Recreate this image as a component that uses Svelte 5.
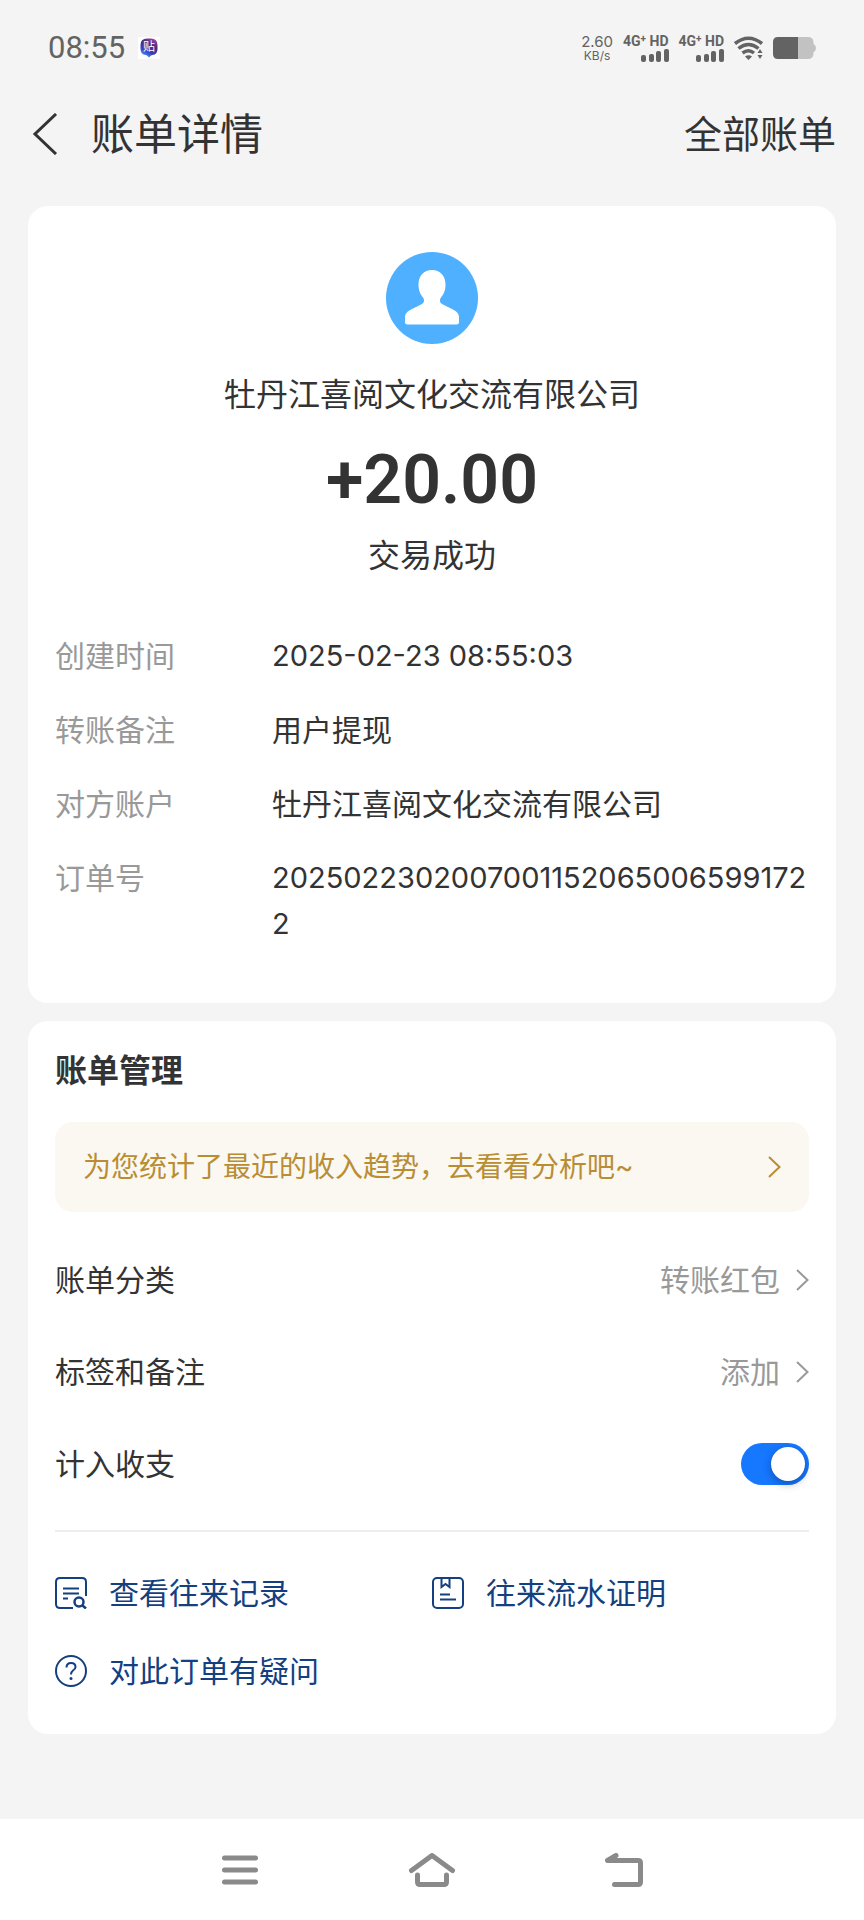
<script lang="ts">
	type Detail = { label: string; value: string; numeric?: boolean };

	const details: Detail[] = [
		{ label: '创建时间', value: '2025-02-23 08:55:03', numeric: true },
		{ label: '转账备注', value: '用户提现' },
		{ label: '对方账户', value: '牡丹江喜阅文化交流有限公司' },
		{ label: '订单号', value: '20250223020070011520650065991722', numeric: true }
	];

	const options = [
		{ label: '账单分类', value: '转账红包' },
		{ label: '标签和备注', value: '添加' }
	];

	const links = [
		{ icon: 'records', label: '查看往来记录' },
		{ icon: 'proof', label: '往来流水证明' },
		{ icon: 'help', label: '对此订单有疑问' }
	];

	let counted = $state(true);
</script>

{#snippet signal()}
	<div class="signal">
		<span class="net">4G<sup>+</sup> HD</span>
		<svg width="28" height="13" viewBox="0 0 28 13" fill="#636363">
			<rect x="0" y="6" width="5" height="7" rx="2" />
			<rect x="8" y="5" width="5" height="8" rx="2" />
			<rect x="15" y="2" width="5" height="11" rx="2" />
			<rect x="23" y="0" width="5" height="13" rx="2" />
		</svg>
	</div>
{/snippet}

{#snippet chevron()}
	<svg width="13" height="22" viewBox="0 0 13 22" fill="none" stroke="currentColor" stroke-width="2">
		<path d="M1 1l10.500 10L1 21" />
	</svg>
{/snippet}

<div class="page">
	<div class="status">
		<span class="time">08:55</span>
		<span class="notice">
			<svg width="18" height="20" viewBox="0 0 18 20">
				<defs>
					<linearGradient id="notice-fill" x1="0.8" y1="0" x2="0.3" y2="1">
						<stop offset="0" stop-color="#b0409c" />
						<stop offset="0.35" stop-color="#43307f" />
						<stop offset="0.7" stop-color="#3d3fc0" />
						<stop offset="1" stop-color="#3fa4ff" />
					</linearGradient>
				</defs>
				<path d="M7 .5h4q6.500 0 6.500 6.500v4q0 5.500-5 6l-1.500.5-2 2-2-2-1.500-.5q-5-.5-5-6V7Q.5.5 7 .5z" fill="url(#notice-fill)" />
				<text x="9" y="13" text-anchor="middle" class="notice-text">贴</text>
			</svg>
		</span>
		<div class="status-right">
			<div class="speed">
				<span class="rate">2.60</span>
				<span class="unit">KB/s</span>
			</div>
			{@render signal()}
			{@render signal()}
			<svg width="29" height="24" viewBox="0 0 29 24" fill="none" stroke="#636363" stroke-width="3.500">
				<path d="M1 7.500Q14.500-3 28 7.500" />
				<path d="M4.500 12.500Q14.500 4.500 24.500 12.500" />
				<path d="M8.500 17Q14.500 12.500 20 17" />
				<path d="M11 20.500q3.500-2.500 7 0L14.500 24z" fill="#636363" stroke="none" />
				<path d="M26 13l2.500 4h-5zM26 23l2.500-4h-5z" fill="#636363" stroke="none" />
			</svg>
			<svg width="43" height="22" viewBox="0 0 43 22">
				<path d="M25 0h10q5 0 5.500 5v2q2.500 1 2.500 4t-2.500 4v2q-.5 5-5.500 5H25z" fill="#c2c2c2" />
				<path d="M5 0h20v22H5q-5 0-5-5V5q0-5 5-5z" fill="#636363" />
			</svg>
		</div>
	</div>

	<header>
		<button class="back" aria-label="返回">
			<svg width="26" height="42" viewBox="0 0 26 42" fill="none" stroke="#333" stroke-width="3">
				<path d="M24 1L3 21l21 20" />
			</svg>
		</button>
		<h1>账单详情</h1>
		<a class="all" href="#all">全部账单</a>
	</header>

	<main>
		<section class="card summary">
			<svg class="avatar" width="92" height="92" viewBox="0 0 92 92">
				<circle cx="46" cy="46" r="46" fill="#4fb0ff" />
				<path
					d="M46 18c8 0 13.500 5.500 13.500 14.500 0 6-2 10-4.500 13-1.500 2-1.500 5 1 6.500l11 5.500c4.500 2.500 6 4.500 6 8V70q0 2.500-2.500 2.500h-49Q19 72.500 19 70v-4.500c0-3.500 1.500-5.500 6-8L36 52c2.500-1.500 2.500-4.500 1-6.500-2.500-3-4.500-7-4.500-13C32.500 23.500 38 18 46 18z"
					fill="#fff"
				/>
			</svg>
			<p class="payee">牡丹江喜阅文化交流有限公司</p>
			<p class="amount">+20.00</p>
			<p class="result">交易成功</p>
			<dl>
				{#each details as item}
					<div class="detail">
						<dt>{item.label}</dt>
						<dd class:numeric={item.numeric}>{item.value}</dd>
					</div>
				{/each}
			</dl>
		</section>

		<section class="card manage">
			<h2>账单管理</h2>
			<a class="banner" href="#analysis">
				<span>为您统计了最近的收入趋势，去看看分析吧~</span>
				{@render chevron()}
			</a>

			<div class="options">
				{#each options as option}
					<button class="option">
						<span>{option.label}</span>
						<span class="option-value">
							{option.value}
							{@render chevron()}
						</span>
					</button>
				{/each}
				<div class="option">
					<label for="counted">计入收支</label>
					<input id="counted" class="toggle" type="checkbox" role="switch" bind:checked={counted} />
				</div>
			</div>

			<nav class="links">
				{#each links as link}
					<a href="#{link.icon}">
						<svg width="32" height="32" viewBox="0 0 32 32" fill="none" stroke="currentColor" stroke-width="2">
							{#if link.icon === 'records'}
								<path d="M18 31H5q-4 0-4-4V5q0-4 4-4h22q4 0 4 4v14" />
								<path d="M8 11.500h16M8 16.500h16M8 21.500h5" />
								<circle cx="24" cy="25" r="4.500" stroke-width="2.500" />
								<path d="M27.500 28.500l3.500 3" stroke-width="2.500" />
							{:else if link.icon === 'proof'}
								<rect x="1" y="1" width="30" height="30" rx="4" />
								<path d="M9.500 1v9l4-3 4 3V1" />
								<path d="M8 17.500h10M8 22.500h16" />
							{:else}
								<circle cx="16" cy="16" r="15" />
								<path d="M11.500 12.500q0-4.500 4.500-4.500t4.500 4q0 2-2.500 3.500-2 1.500-2 4" />
								<circle cx="16" cy="23.500" r="1.500" fill="currentColor" stroke="none" />
							{/if}
						</svg>
						<span>{link.label}</span>
					</a>
				{/each}
			</nav>
		</section>
	</main>

	<div class="system-nav">
		<button aria-label="最近任务">
			<svg width="36" height="30" viewBox="0 0 36 30">
				<path d="M2.500 3h31M2.500 15h31M2.500 27h31" />
			</svg>
		</button>
		<button aria-label="主屏幕">
			<svg width="46" height="34" viewBox="0 0 46 34">
				<path d="M2.500 17.500L23 2.500l20.500 15" />
				<path d="M8.500 22v7q0 2.500 2.500 2.500h24q2.500 0 2.500-2.500v-7" />
			</svg>
		</button>
		<button aria-label="返回上一页">
			<svg width="38" height="34" viewBox="0 0 38 34">
				<path d="M11 2.500L2.500 7.500H33q2.500 0 2.500 2.500v19q0 2.500-2.500 2.500H9.500" />
			</svg>
		</button>
	</div>
</div>

<style>
	:global(body) {
		background: #f4f4f4;
	}

	.page {
		min-height: 100vh;
		display: flex;
		flex-direction: column;
		background: #f4f4f4;
		color: #333;
		font-family: Inter, 'Noto Sans CJK SC', sans-serif;
		font-size: 30px;
		line-height: 46px;
	}

	h1,
	h2,
	p,
	dl,
	dd {
		margin: 0;
	}

	a {
		color: inherit;
		text-decoration: none;
	}

	button {
		padding: 0;
		border: 0;
		background: none;
		color: inherit;
		font: inherit;
		cursor: pointer;
	}

	svg {
		display: block;
		flex: none;
	}

	.status {
		display: flex;
		align-items: center;
		height: 96px;
		padding: 0 48px;
		color: #636363;
	}

	.time {
		font-family: Roboto, sans-serif;
		font-size: 31px;
	}

	.notice {
		display: flex;
		justify-content: center;
		margin-left: 13px;
		padding: 1px 2px;
		background: #fff;
	}

	.notice-text {
		fill: #fff;
		font-size: 12px;
		font-weight: 400;
	}

	.status-right {
		display: flex;
		align-items: center;
		gap: 10px;
		margin-left: auto;
	}

	.speed {
		display: flex;
		flex-direction: column;
		align-items: center;
	}

	.rate {
		font-size: 15px;
		line-height: 16px;
	}

	.unit {
		font-size: 12px;
		line-height: 12px;
	}

	.signal {
		display: flex;
		flex-direction: column;
		align-items: flex-end;
		gap: 1px;
	}

	.net {
		font-family: Roboto, sans-serif;
		font-size: 14px;
		font-weight: 700;
		line-height: 13px;
	}

	.net sup {
		font-size: 10px;
		line-height: 0;
		vertical-align: 4px;
	}

	header {
		display: flex;
		align-items: center;
		height: 76px;
		margin-bottom: 34px;
		padding: 0 28px;
	}

	.back {
		padding: 0 4px;
	}

	h1 {
		margin-left: 29px;
		font-size: 43px;
		font-weight: 400;
	}

	.all {
		margin-left: auto;
		font-size: 38px;
	}

	main {
		display: flex;
		flex-direction: column;
		gap: 18px;
		padding: 0 28px;
	}

	.card {
		padding: 27px;
		border-radius: 20px;
		background: #fff;
	}

	.summary {
		padding-top: 46px;
		padding-bottom: 56px;
		text-align: center;
	}

	.avatar {
		margin: 0 auto 28px;
	}

	.payee,
	.result {
		font-size: 32px;
	}

	.amount {
		margin: 24px 0 15px;
		font-family: Roboto, sans-serif;
		font-size: 68px;
		font-weight: 600;
		line-height: 76px;
	}

	dl {
		display: flex;
		flex-direction: column;
		gap: 28px;
		margin-top: 54px;
		text-align: left;
	}

	.detail {
		display: grid;
		grid-template-columns: 217px 1fr;
	}

	dt {
		color: #999;
	}

	dd {
		word-break: break-all;
	}

	.numeric {
		font-size: 29px;
	}

	.manage {
		padding-bottom: 40px;
	}

	h2 {
		font-size: 32px;
		font-weight: 700;
	}

	.banner {
		display: flex;
		align-items: center;
		justify-content: space-between;
		height: 90px;
		margin-top: 28px;
		padding: 0 28px;
		border-radius: 18px;
		background: #faf8f1;
		color: #b98d34;
		font-size: 28px;
	}

	.options {
		padding: 22px 0 20px;
		border-bottom: 2px solid #eee;
	}

	.option {
		display: flex;
		align-items: center;
		justify-content: space-between;
		width: 100%;
		height: 92px;
	}

	.option-value {
		display: flex;
		align-items: center;
		gap: 16px;
		color: #999;
	}

	.toggle {
		appearance: none;
		box-sizing: border-box;
		width: 68px;
		height: 42px;
		margin: 0;
		padding: 4px;
		border-radius: 21px;
		background: #e5e5e5;
		cursor: pointer;
	}

	.toggle::before {
		content: '';
		display: block;
		width: 34px;
		height: 34px;
		border-radius: 50%;
		background: #fff;
		box-shadow: 0 3px 8px rgba(0, 0, 0, 0.3);
	}

	.toggle:checked {
		background: #1677ff;
	}

	.toggle:checked::before {
		margin-left: auto;
	}

	.links {
		display: grid;
		grid-template-columns: 1fr 1fr;
		row-gap: 32px;
		padding-top: 38px;
		color: #143f80;
	}

	.links a {
		display: flex;
		align-items: center;
		gap: 22px;
	}

	.system-nav {
		display: grid;
		grid-template-columns: repeat(3, 1fr);
		height: 101px;
		margin-top: auto;
		padding: 0 calc(100% / 6);
		background: #fff;
	}

	.system-nav button {
		display: flex;
		align-items: center;
		justify-content: center;
	}

	.system-nav svg {
		fill: none;
		stroke: #8a8a8a;
		stroke-width: 5;
		stroke-linecap: round;
		stroke-linejoin: round;
	}
</style>
